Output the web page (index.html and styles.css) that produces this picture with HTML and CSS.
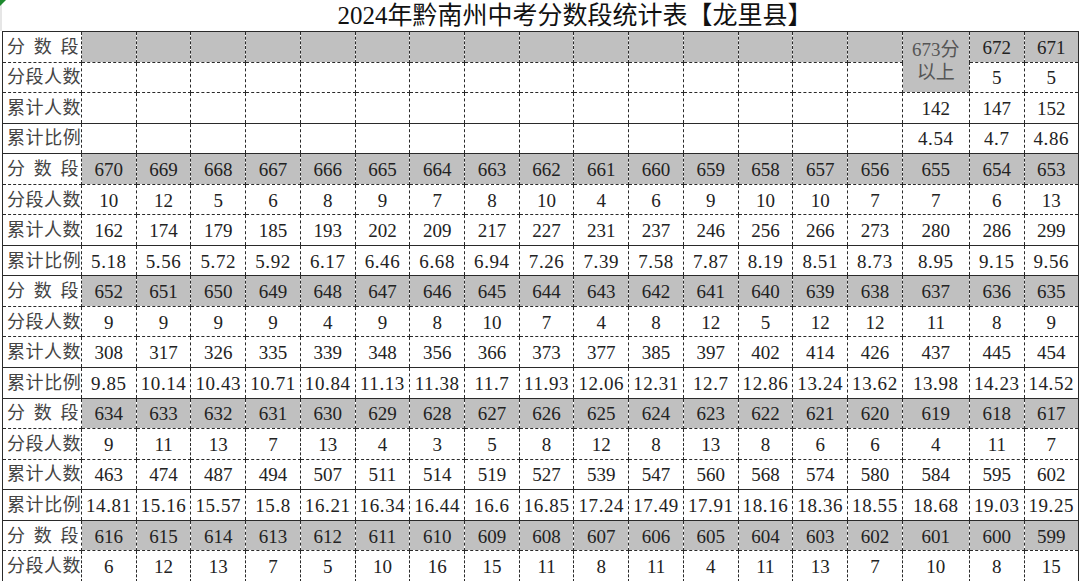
FILE: index.html
```html
<!DOCTYPE html>
<html lang="zh-CN">
<head>
<meta charset="utf-8">
<title>2024年黔南州中考分数段统计表【龙里县】</title>
<link rel="stylesheet" href="styles.css">
</head>
<body>
<div class="sheet">
  <span class="marker"></span>
  <div class="title">2024年黔南州中考分数段统计表【龙里县】</div>
  <table class="grid">
    <colgroup>
      <col class="c-label">
      <col class="c"><col class="c"><col class="c"><col class="c"><col class="c">
      <col class="c"><col class="c"><col class="c"><col class="c"><col class="c">
      <col class="c"><col class="c"><col class="c"><col class="c"><col class="c">
      <col class="c-wide"><col class="c-a"><col class="c-b">
    </colgroup>
    <tbody>
      <tr class="seg">
        <td class="lbl spread">分数段</td>
        <td></td><td></td><td></td><td></td><td></td><td></td><td></td><td></td><td></td><td></td><td></td><td></td><td></td><td></td><td></td>
        <td class="top" rowspan="2"><span class="top-text">673分<br>以上</span></td><td>672</td><td>671</td>
      </tr>
      <tr>
        <td class="lbl">分段人数</td>
        <td></td><td></td><td></td><td></td><td></td><td></td><td></td><td></td><td></td><td></td><td></td><td></td><td></td><td></td><td></td>
        <td>5</td><td>5</td>
      </tr>
      <tr>
        <td class="lbl">累计人数</td>
        <td></td><td></td><td></td><td></td><td></td><td></td><td></td><td></td><td></td><td></td><td></td><td></td><td></td><td></td><td></td>
        <td>142</td><td>147</td><td>152</td>
      </tr>
      <tr class="ratio">
        <td class="lbl">累计比例</td>
        <td></td><td></td><td></td><td></td><td></td><td></td><td></td><td></td><td></td><td></td><td></td><td></td><td></td><td></td><td></td>
        <td>4.54</td><td>4.7</td><td>4.86</td>
      </tr>

      <tr class="seg">
        <td class="lbl spread">分数段</td>
        <td>670</td><td>669</td><td>668</td><td>667</td><td>666</td><td>665</td><td>664</td><td>663</td><td>662</td><td>661</td><td>660</td><td>659</td><td>658</td><td>657</td><td>656</td><td>655</td><td>654</td><td>653</td>
      </tr>
      <tr>
        <td class="lbl">分段人数</td>
        <td>10</td><td>12</td><td>5</td><td>6</td><td>8</td><td>9</td><td>7</td><td>8</td><td>10</td><td>4</td><td>6</td><td>9</td><td>10</td><td>10</td><td>7</td><td>7</td><td>6</td><td>13</td>
      </tr>
      <tr>
        <td class="lbl">累计人数</td>
        <td>162</td><td>174</td><td>179</td><td>185</td><td>193</td><td>202</td><td>209</td><td>217</td><td>227</td><td>231</td><td>237</td><td>246</td><td>256</td><td>266</td><td>273</td><td>280</td><td>286</td><td>299</td>
      </tr>
      <tr class="ratio">
        <td class="lbl">累计比例</td>
        <td>5.18</td><td>5.56</td><td>5.72</td><td>5.92</td><td>6.17</td><td>6.46</td><td>6.68</td><td>6.94</td><td>7.26</td><td>7.39</td><td>7.58</td><td>7.87</td><td>8.19</td><td>8.51</td><td>8.73</td><td>8.95</td><td>9.15</td><td>9.56</td>
      </tr>

      <tr class="seg">
        <td class="lbl spread">分数段</td>
        <td>652</td><td>651</td><td>650</td><td>649</td><td>648</td><td>647</td><td>646</td><td>645</td><td>644</td><td>643</td><td>642</td><td>641</td><td>640</td><td>639</td><td>638</td><td>637</td><td>636</td><td>635</td>
      </tr>
      <tr>
        <td class="lbl">分段人数</td>
        <td>9</td><td>9</td><td>9</td><td>9</td><td>4</td><td>9</td><td>8</td><td>10</td><td>7</td><td>4</td><td>8</td><td>12</td><td>5</td><td>12</td><td>12</td><td>11</td><td>8</td><td>9</td>
      </tr>
      <tr>
        <td class="lbl">累计人数</td>
        <td>308</td><td>317</td><td>326</td><td>335</td><td>339</td><td>348</td><td>356</td><td>366</td><td>373</td><td>377</td><td>385</td><td>397</td><td>402</td><td>414</td><td>426</td><td>437</td><td>445</td><td>454</td>
      </tr>
      <tr class="ratio">
        <td class="lbl">累计比例</td>
        <td>9.85</td><td>10.14</td><td>10.43</td><td>10.71</td><td>10.84</td><td>11.13</td><td>11.38</td><td>11.7</td><td>11.93</td><td>12.06</td><td>12.31</td><td>12.7</td><td>12.86</td><td>13.24</td><td>13.62</td><td>13.98</td><td>14.23</td><td>14.52</td>
      </tr>

      <tr class="seg">
        <td class="lbl spread">分数段</td>
        <td>634</td><td>633</td><td>632</td><td>631</td><td>630</td><td>629</td><td>628</td><td>627</td><td>626</td><td>625</td><td>624</td><td>623</td><td>622</td><td>621</td><td>620</td><td>619</td><td>618</td><td>617</td>
      </tr>
      <tr>
        <td class="lbl">分段人数</td>
        <td>9</td><td>11</td><td>13</td><td>7</td><td>13</td><td>4</td><td>3</td><td>5</td><td>8</td><td>12</td><td>8</td><td>13</td><td>8</td><td>6</td><td>6</td><td>4</td><td>11</td><td>7</td>
      </tr>
      <tr>
        <td class="lbl">累计人数</td>
        <td>463</td><td>474</td><td>487</td><td>494</td><td>507</td><td>511</td><td>514</td><td>519</td><td>527</td><td>539</td><td>547</td><td>560</td><td>568</td><td>574</td><td>580</td><td>584</td><td>595</td><td>602</td>
      </tr>
      <tr class="ratio">
        <td class="lbl">累计比例</td>
        <td>14.81</td><td>15.16</td><td>15.57</td><td>15.8</td><td>16.21</td><td>16.34</td><td>16.44</td><td>16.6</td><td>16.85</td><td>17.24</td><td>17.49</td><td>17.91</td><td>18.16</td><td>18.36</td><td>18.55</td><td>18.68</td><td>19.03</td><td>19.25</td>
      </tr>

      <tr class="seg">
        <td class="lbl spread">分数段</td>
        <td>616</td><td>615</td><td>614</td><td>613</td><td>612</td><td>611</td><td>610</td><td>609</td><td>608</td><td>607</td><td>606</td><td>605</td><td>604</td><td>603</td><td>602</td><td>601</td><td>600</td><td>599</td>
      </tr>
      <tr>
        <td class="lbl">分段人数</td>
        <td>6</td><td>12</td><td>13</td><td>7</td><td>5</td><td>10</td><td>16</td><td>15</td><td>11</td><td>8</td><td>11</td><td>4</td><td>11</td><td>13</td><td>7</td><td>10</td><td>8</td><td>15</td>
      </tr>
    </tbody>
  </table>
</div>
</body>
</html>
```

FILE: styles.css
```css
html, body {
  margin: 0;
  padding: 0;
  background: #ffffff;
}

body {
  width: 1080px;
  height: 581px;
  overflow: hidden;
  font-family: "Liberation Serif", "Noto Sans CJK SC", serif;
  color: #222222;
}

.sheet {
  position: relative;
  width: 1080px;
}

.marker {
  position: absolute;
  left: 0;
  top: 0;
  width: 0;
  height: 0;
  border-top: 6px solid #1e8a2e;
  border-right: 6px solid transparent;
}

.title {
  height: 31px;
  box-sizing: border-box;
  padding-left: 68px;
  border-left: 2px solid #e6e6e6;
  text-align: center;
  font-size: 25px;
  line-height: 31px;
  color: #111111;
  white-space: nowrap;
}

.grid {
  margin-left: 2px;
  width: 1076px;
  table-layout: fixed;
  border-collapse: collapse;
  font-size: 19px;
}

.c-label { width: 79px; }
.c { width: 54.73px; }
.c-wide { width: 67px; }
.c-a { width: 55px; }
.c-b { width: 54px; }

.grid tr {
  height: 30.55px;
}

.grid td {
  border: 1px dashed #2a2a2a;
  padding: 2px 0 0 0;
  text-align: center;
  vertical-align: middle;
  line-height: 22px;
  white-space: nowrap;
  overflow: hidden;
}

.grid tr.ratio td {
  letter-spacing: 0.6px;
}

.grid tr.seg td,
.grid tr.ratio td {
  border-top: 1px solid #2a2a2a;
}

.grid tr.seg td {
  background: #c0c0c0;
}

.grid tr td:first-child {
  border-left: 1px solid #2a2a2a;
}

.grid tr td:last-child {
  border-right: 1px solid #2a2a2a;
}

.grid tr.seg td.lbl,
.grid td.lbl {
  background: #ffffff;
  text-align: left;
  padding: 0 2px 0 4px;
  font-size: 18px;
  letter-spacing: 0.5px;
  color: #444444;
}

.grid td.spread {
  text-align: justify;
  text-align-last: justify;
  text-justify: inter-character;
  letter-spacing: 0;
}

.grid td.top {
  background: #c0c0c0;
  vertical-align: top;
  color: #555555;
  padding: 0;
}

.top-text {
  display: block;
  padding-top: 6px;
  line-height: 23px;
}
```
